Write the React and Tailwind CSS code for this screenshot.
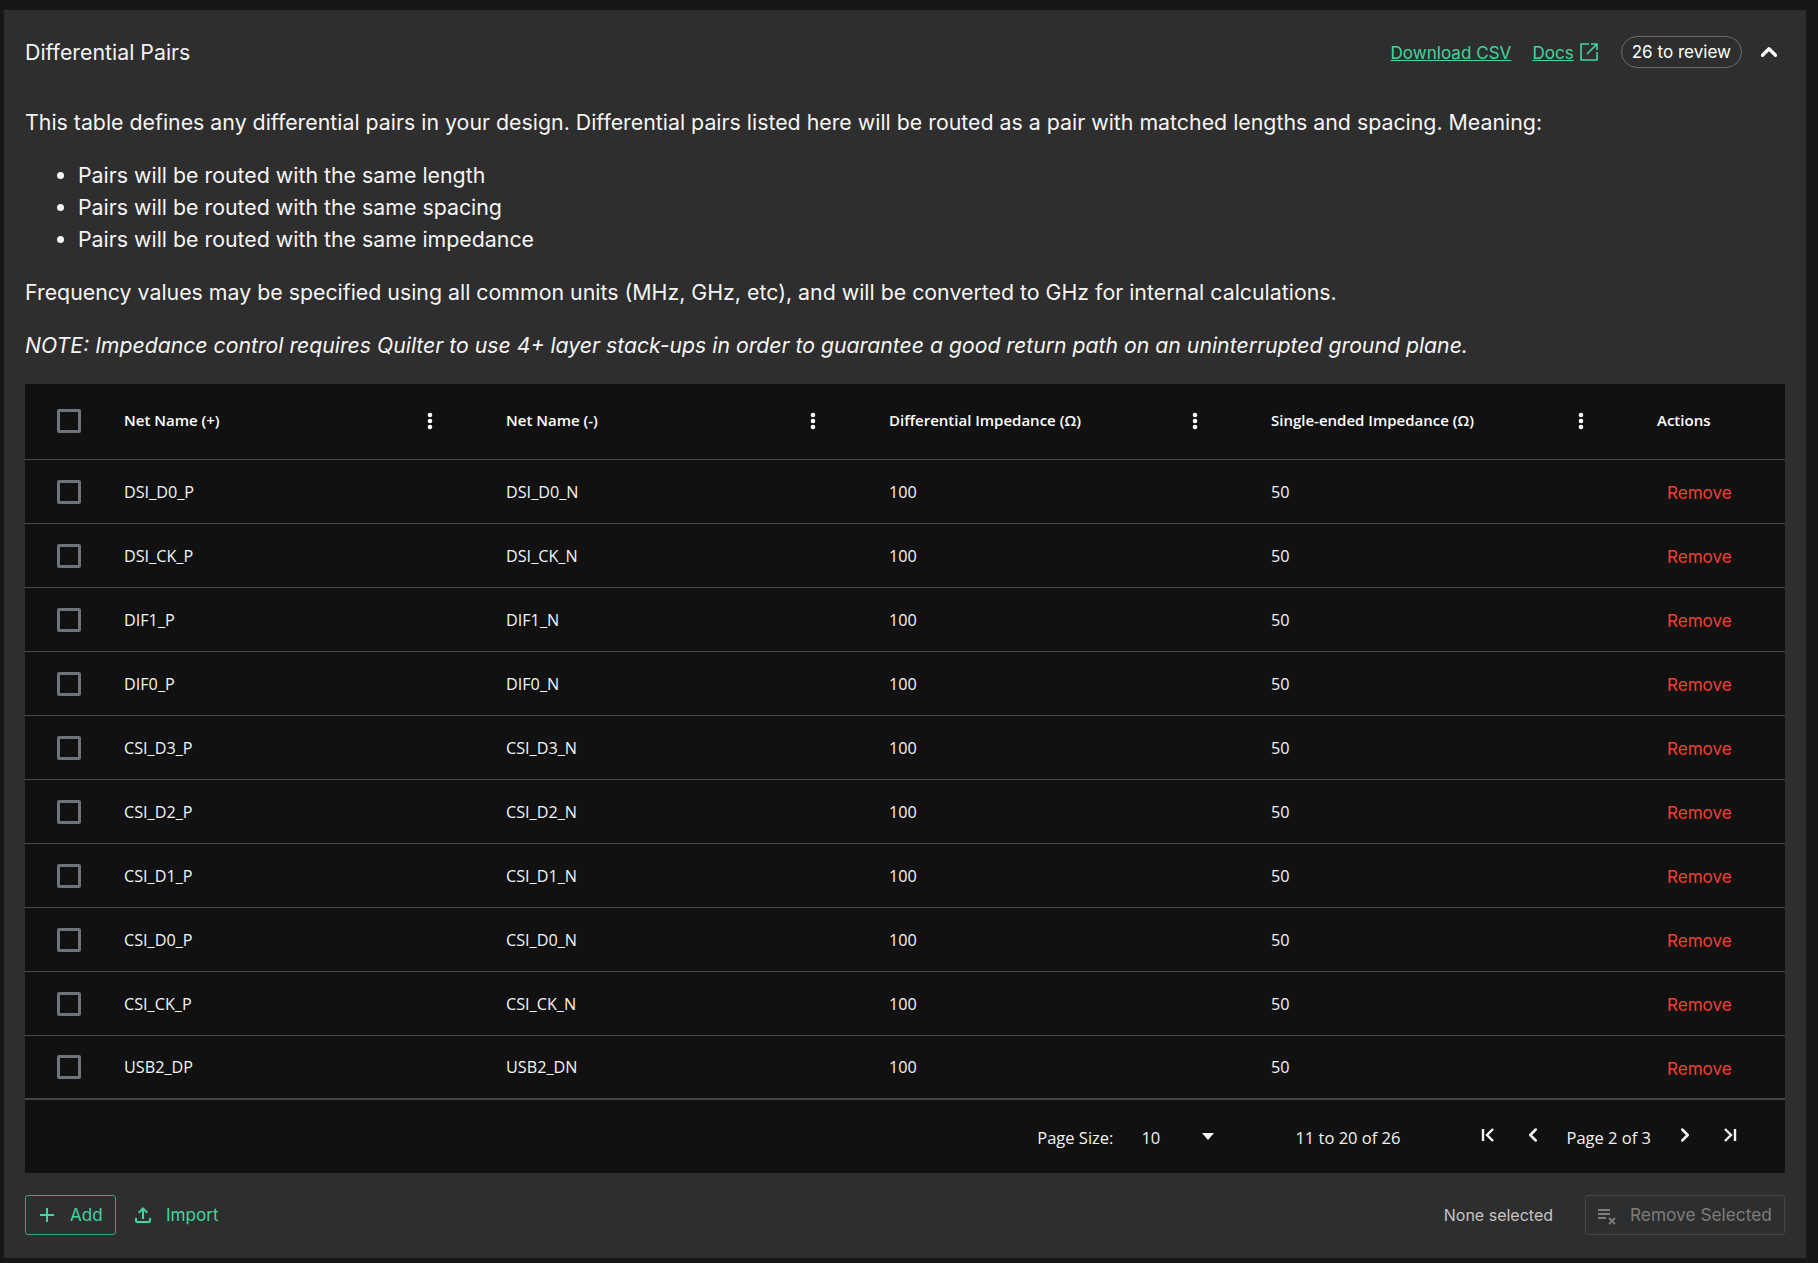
import React from 'react';
import { ChevronUp, ChevronLeft, ChevronRight } from 'lucide-react';

const rows = [
  ['DSI_D0_P', 'DSI_D0_N'],
  ['DSI_CK_P', 'DSI_CK_N'],
  ['DIF1_P', 'DIF1_N'],
  ['DIF0_P', 'DIF0_N'],
  ['CSI_D3_P', 'CSI_D3_N'],
  ['CSI_D2_P', 'CSI_D2_N'],
  ['CSI_D1_P', 'CSI_D1_N'],
  ['CSI_D0_P', 'CSI_D0_N'],
  ['CSI_CK_P', 'CSI_CK_N'],
  ['USB2_DP', 'USB2_DN'],
];

const gridCols = 'grid grid-cols-[83px_382px_383px_382px_386px_144px]';

const Checkbox = () => (
  <div className="w-6 h-6 rounded-[2px] border-[3px] border-[#6f737a] ml-8" />
);

const Kebab = () => (
  <svg width="6" height="18" viewBox="0 0 6 18" className="text-white" fill="currentColor">
    <circle cx="3" cy="3" r="2.3" />
    <circle cx="3" cy="9" r="2.3" />
    <circle cx="3" cy="15" r="2.3" />
  </svg>
);

const HeaderCell = ({ title }) => (
  <div className="flex items-center justify-between pl-4 pr-[57px]">
    <span className="font-semibold text-[15px] text-white">{title}</span>
    <Kebab />
  </div>
);

const PageIcon = ({ children, className }) => (
  <svg width="24" height="24" viewBox="0 0 24 24" fill="none" stroke="currentColor" strokeWidth="2.4" className={className}>
    {children}
  </svg>
);

const App = () => {
  return (
    <div className="min-h-[1263px] bg-[#171717] pt-[10px] pl-1 pr-3 pb-[5px] font-['Inter',sans-serif] text-white">
      <div className="bg-[#2e2e2e] h-[1248px] px-[21px]">
        <div className="flex items-center justify-between h-[84px]">
          <h2 className="text-[21.33px] font-normal text-[#f2f2f2] mt-[2px]">Differential Pairs</h2>
          <div className="flex items-center">
            <a className="text-[#40d6a0] underline text-[17.07px] mr-[21px] mt-[2px]">Download CSV</a>
            <a className="text-[#40d6a0] underline text-[17.07px] mt-[2px]">Docs</a>
            <svg width="24" height="24" viewBox="0 0 24 24" fill="none" stroke="#40d6a0" strokeWidth="1.6" className="ml-[3px] mr-5 -mt-[1px]">
              <path d="M12 4H4v16h16v-8M14 4h6v6M20 4 10 14" />
            </svg>
            <span className="border border-[#6a6a6a] rounded-full h-8 px-[10px] flex items-center text-[17.07px] text-white">26 to review</span>
            <ChevronUp size={26} strokeWidth={3} className="ml-[14px] mr-[3px]" />
          </div>
        </div>

        <div className="text-[21.33px] leading-8 text-[#f5f5f5]">
          <p className="mt-3">This table defines any differential pairs in your design. Differential pairs listed here will be routed as a pair with matched lengths and spacing. Meaning:</p>
          <ul className="list-disc pl-[53px] mt-[21px]">
            <li>Pairs will be routed with the same length</li>
            <li>Pairs will be routed with the same spacing</li>
            <li>Pairs will be routed with the same impedance</li>
          </ul>
          <p className="mt-[21px]">Frequency values may be specified using all common units (MHz, GHz, etc), and will be converted to GHz for internal calculations.</p>
          <p className="mt-[21px] italic text-[21.23px]">NOTE: Impedance control requires Quilter to use 4+ layer stack-ups in order to guarantee a good return path on an uninterrupted ground plane.</p>
        </div>

        <div className="mt-[23px] bg-[#111111] font-['Open_Sans',sans-serif]">
          <div className={`${gridCols} h-[76px] pb-[2px] items-center border-b border-[#4a4a4a]`}>
            <Checkbox />
            <HeaderCell title="Net Name (+)" />
            <HeaderCell title="Net Name (-)" />
            <HeaderCell title="Differential Impedance (Ω)" />
            <HeaderCell title="Single-ended Impedance (Ω)" />
            <span className="font-semibold text-[15px] pl-4">Actions</span>
          </div>
          {rows.map(([pos, neg], idx) => (
            <div
              key={pos}
              className={`${gridCols} h-[64px] items-center text-[16.2px] text-[#f4f4f4] ${idx === rows.length - 1 ? 'border-b-2 border-[#444]' : 'border-b border-[#4a4a4a]'}`}
            >
              <Checkbox />
              <span className="pl-4 pt-px">{pos}</span>
              <span className="pl-4 pt-px">{neg}</span>
              <span className="pl-4 pt-px">100</span>
              <span className="pl-4 pt-px">50</span>
              <span className="pl-[26px] pt-[3px] font-['Inter',sans-serif] text-[17.07px] text-[#f03e32]">Remove</span>
            </div>
          ))}
          <div className="h-[73px] pt-[3px] flex items-center justify-end text-[16.5px] text-[#f4f4f4] pr-[43px]">
            <span>Page Size:</span>
            <span className="ml-[28px] w-[61px]">10</span>
            <svg width="12" height="7" viewBox="0 0 12 7" fill="white" className="-mt-1"><path d="M0 0h12L6 7z" /></svg>
            <span className="ml-[81px]">11 to 20 of 26</span>
            <PageIcon className="ml-[76px] -mt-[6px]">
              <path d="M7 6v12M17 6l-6 6 6 6" />
            </PageIcon>
            <ChevronLeft size={22} strokeWidth={2.8} className="ml-[22px] -mt-[6px]" />
            <span className="ml-[22px]">Page 2 of 3</span>
            <ChevronRight size={22} strokeWidth={2.8} className="ml-[23px] -mt-[6px]" />
            <PageIcon className="ml-[22px] -mt-[6px]">
              <path d="M17 6v12M7 6l6 6-6 6" />
            </PageIcon>
          </div>
        </div>

        <div className="flex items-center justify-between mt-[22px]">
          <div className="flex items-center text-[17.07px] text-[#40d6a0]">
            <button className="h-10 w-[91px] border border-[#40d6a0]/70 rounded-[3px] flex items-center pl-[9px]">
              <svg width="24" height="24" viewBox="0 0 24 24" fill="currentColor">
                <path d="M19 13h-6v6h-2v-6H5v-2h6V5h2v6h6v2z" />
              </svg>
              <span className="ml-[11px]">Add</span>
            </button>
            <svg width="24" height="24" viewBox="0 0 24 24" fill="currentColor" className="ml-[15px]">
              <path d="M18 15v3H6v-3H4v3c0 1.1.9 2 2 2h12c1.1 0 2-.9 2-2v-3h-2zM7 9l1.41 1.41L11 7.83V16h2V7.83l2.59 2.58L17 9l-5-5-5 5z" />
            </svg>
            <span className="ml-[11px]">Import</span>
          </div>
          <div className="flex items-center">
            <span className="text-[16px] text-[#c4c4c4] mr-[32px]">None selected</span>
            <button className="h-10 w-[200px] border border-[#474747] rounded-[3px] flex items-center pl-[10px] text-[17.3px] text-[#7d7d7d]">
              <svg width="22" height="22" viewBox="0 0 22 22" fill="none" stroke="currentColor" strokeWidth="1.8">
                <path d="M2 6h12M2 10h12M2 14h8M13 14l6 6M19 14l-6 6" />
              </svg>
              <span className="ml-[12px]">Remove Selected</span>
            </button>
          </div>
        </div>
      </div>
    </div>
  );
};

export default App;
